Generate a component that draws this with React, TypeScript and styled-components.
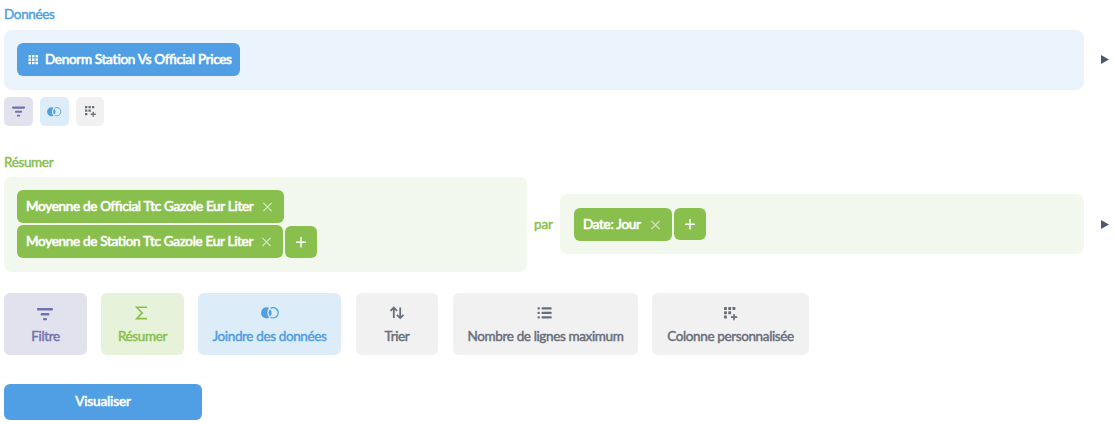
import React from "react";
import styled, { createGlobalStyle } from "styled-components";

const color = {
  brand: "#509ee3",
  green: "#88bf4d",
  purple: "#7172ad",
  dark: "#696e7b",
  arrow: "#4c5773",
};

const GlobalStyle = createGlobalStyle`
  * { box-sizing: border-box; }
  body { margin: 0; background: #fff; }
`;

const Page = styled.main`
  width: 1115px;
  height: 424px;
  padding: 5px 0 0 4px;
  overflow: hidden;
  font: 400 13.5px/18px Lato, "Liberation Sans", sans-serif;
  font-feature-settings: "liga" 1;
  -webkit-text-stroke: 0.45px currentColor;
`;

const StepTitle = styled.h2<{ $color: string }>`
  margin: 0;
  height: 18px;
  font: inherit;
  letter-spacing: -0.35px;
  color: ${(p) => p.$color};
`;

const StepRow = styled.div<{ $top: number }>`
  display: flex;
  align-items: center;
  margin-top: ${(p) => p.$top}px;
`;

const Cell = styled.div<{ $bg: string; $width: number; $height: number; $left?: number }>`
  display: flex;
  flex-wrap: wrap;
  align-content: flex-start;
  gap: 2px;
  width: ${(p) => p.$width}px;
  height: ${(p) => p.$height}px;
  padding: 13px;
  padding-left: ${(p) => p.$left ?? 13}px;
  border-radius: 8px;
  background: ${(p) => p.$bg};
`;

const ClauseBox = styled(Cell)`
  margin-bottom: 1px;
  padding-top: 14px;
`;

const Pill = styled.div<{ $bg: string; $width: number }>`
  display: flex;
  align-items: center;
  justify-content: space-between;
  width: ${(p) => p.$width}px;
  height: 33px;
  padding: 0 9px 1px;
  border-radius: 6px;
  color: #fff;
  background: ${(p) => p.$bg};
  white-space: nowrap;
`;

const PillRow = styled.div`
  display: flex;
  align-items: flex-end;
  gap: 2px;
  width: 100%;
`;

const TopRow = styled(PillRow)`
  align-items: flex-start;
`;

const AddButton = styled.button`
  display: flex;
  align-items: center;
  justify-content: center;
  width: 32px;
  height: 32px;
  padding: 0;
  border: 0;
  border-radius: 6px;
  color: #fff;
  background: ${color.green};
`;

const By = styled.span`
  width: 33px;
  padding-bottom: 2px;
  text-align: center;
  letter-spacing: -0.1px;
  color: ${color.green};
`;

const Preview = styled.div`
  display: flex;
  margin: 0 0 1px 17px;
  color: ${color.arrow};
`;

const SmallActions = styled.div`
  display: flex;
  gap: 7px;
  margin: 7px 0 27px;
`;

const SmallAction = styled.button<{ $bg: string; $color: string; $width?: number }>`
  display: flex;
  align-items: center;
  justify-content: center;
  width: ${(p) => p.$width ?? 29}px;
  height: 29px;
  padding: 0 1px 0 0;
  border: 0;
  border-radius: 5px;
  color: ${(p) => p.$color};
  background: ${(p) => p.$bg};
`;

const SmallColumnAction = styled(SmallAction)`
  padding: 0 0 0 1px;
`;

const Actions = styled.div`
  display: flex;
  margin-top: 21px;
`;

const Action = styled.button<{ $bg: string; $color: string; $width: number; $gap?: number }>`
  display: flex;
  flex-direction: column;
  align-items: center;
  width: ${(p) => p.$width}px;
  height: 62px;
  margin-right: ${(p) => p.$gap ?? 14}px;
  padding: 13px 0 0;
  border: 0;
  border-radius: 6px;
  font: inherit;
  letter-spacing: -0.37px;
  color: ${(p) => p.$color};
  background: ${(p) => p.$bg};
  white-space: nowrap;
`;

const ActionIcon = styled.span<{ $top?: number; $right?: number }>`
  display: flex;
  height: 21px;
  padding: ${(p) => p.$top ?? 0}px ${(p) => p.$right ?? 0}px 0 0;
`;

const Visualize = styled.button`
  display: block;
  width: 198px;
  height: 36px;
  margin-top: 29px;
  padding: 0 0 2px;
  border: 0;
  border-radius: 6px;
  font: inherit;
  letter-spacing: -0.13px;
  -webkit-text-stroke-width: 0.6px;
  color: #fff;
  background: ${color.brand};
`;

const Glyph = styled.svg`
  display: block;
  flex: none;
  overflow: visible;
`;

const TableIcon = () => (
  <Glyph width="10" height="9" viewBox="0 0 10 9" fill="currentColor">
    {[0, 3.4, 6.8].flatMap((y) =>
      [0.5, 4, 7.5].map((x) => <rect key={`${x}-${y}`} x={x} y={y} width="2.5" height="2.4" />)
    )}
  </Glyph>
);

const FilterIcon = ({ size }: { size: number }) => (
  <Glyph width={size} height={size} viewBox="0 0 16 16" fill="currentColor">
    <rect x="0" y="1.9" width="16" height="2.6" rx="1" />
    <rect x="3.6" y="7" width="8.8" height="2.5" rx="1" />
    <rect x="6" y="11.9" width="4" height="2.4" rx="1" />
  </Glyph>
);

const JoinIcon = ({ width }: { width: number }) => (
  <Glyph width={width} height={(width * 12) / 18} viewBox="0 0 18 12">
    <path d="M8.3 .9A5.7 5.7 0 1 0 8.3 11.1A8 8 0 0 1 8.3 .9Z" fill="currentColor" />
    <path d="M9.3 2.2C11.5 4.7 11.5 7.3 9.3 9.8C7.3 7.3 7.3 4.7 9.3 2.2Z" fill="currentColor" />
    <path d="M9.8 1.4A5.3 5.3 0 1 1 9.8 10.6" fill="none" stroke="currentColor" strokeWidth="1.2" />
  </Glyph>
);

const CustomColumnIcon = ({ size }: { size: number }) => (
  <Glyph width={size} height={size} viewBox="0 0 14 14" fill="currentColor">
    {[[0, 0], [4.4, 0], [8.8, 0], [0, 4.4], [4.4, 4.4], [0, 8.8]].map(([x, y]) => (
      <rect key={`${x}-${y}`} x={x} y={y} width="3" height="3" rx=".4" />
    ))}
    <path d="M9.6 7.3h1.6v2.4h2.5v1.6h-2.5v2.5H9.6v-2.5H7.2V9.7h2.4z" />
  </Glyph>
);

const SumIcon = () => (
  <Glyph width="12" height="14" viewBox="0 0 12 14" fill="none" stroke="currentColor" strokeWidth="1.6">
    <path d="M11 1.2H.7L6.2 6.9L.7 12.6H11" />
  </Glyph>
);

const SortIcon = () => (
  <Glyph width="14" height="14" viewBox="0 0 14 14" fill="none" stroke="currentColor" strokeWidth="1.8">
    <path d="M3.8 12V1.6M.5 4.9L3.8 1.6L7.1 4.9M10.2 1.5V12M6.9 8.8L10.2 12.1L13.5 8.8" />
  </Glyph>
);

const ListIcon = () => (
  <Glyph width="14" height="14" viewBox="0 0 14 14" fill="currentColor">
    {[1.2, 5.7, 10.2].map((y) => (
      <React.Fragment key={y}>
        <rect x="-.5" y={y} width="2.4" height="2.3" rx=".8" />
        <rect x="3.5" y={y} width="10.2" height="2.3" rx=".8" />
      </React.Fragment>
    ))}
  </Glyph>
);

const CloseIcon = () => (
  <Glyph width="9" height="9" viewBox="0 0 9 9" stroke="currentColor" strokeWidth="1.3" opacity=".65">
    <path d="M.4 .9L8.6 9.1M8.6 .9L.4 9.1" />
  </Glyph>
);

const PlusIcon = () => (
  <Glyph width="10" height="10" viewBox="0 0 10 10" stroke="currentColor" strokeWidth="1.4">
    <path d="M5 0V10.5M0 5.3H10" />
  </Glyph>
);

const PlayIcon = () => (
  <Glyph width="8" height="9" viewBox="0 0 8 9" fill="currentColor">
    <path d="M0 0L8 4.5L0 9Z" />
  </Glyph>
);

const PillText = styled.span`
  letter-spacing: -0.3px;
  -webkit-text-stroke-width: 0.65px;
`;

const ClauseClose = styled.span`
  padding-right: 3px;
`;

const Clause = ({ text, width }: { text: string; width: number }) => (
  <Pill $bg={color.green} $width={width}>
    <PillText>{text}</PillText>
    <ClauseClose>
      <CloseIcon />
    </ClauseClose>
  </Pill>
);

const SourcePill = styled(Pill)`
  justify-content: flex-start;
  gap: 7px;
  padding-left: 11px;
`;

export default function App() {
  return (
    <Page>
      <GlobalStyle />
      <StepTitle $color={color.brand}>Données</StepTitle>
      <StepRow $top={7}>
        <Cell $bg="#ebf4fc" $width={1080} $height={60}>
          <SourcePill $bg={color.brand} $width={223}>
            <TableIcon />
            <PillText>Denorm Station Vs Official Prices</PillText>
          </SourcePill>
        </Cell>
        <Preview><PlayIcon /></Preview>
      </StepRow>
      <SmallActions>
        <SmallAction $bg="#e2e2ee" $color={color.purple}><FilterIcon size={13} /></SmallAction>
        <SmallAction $bg="#dcecf9" $color={color.brand}><JoinIcon width={14} /></SmallAction>
        <SmallColumnAction $bg="#f1f1f1" $color={color.dark} $width={28}><CustomColumnIcon size={11} /></SmallColumnAction>
      </SmallActions>

      <StepTitle $color={color.green}>Résumer</StepTitle>
      <StepRow $top={6}>
        <Cell $bg="#f2f8ed" $width={523} $height={95}>
          <PillRow>
            <Clause text="Moyenne de Official Ttc Gazole Eur Liter" width={267} />
          </PillRow>
          <PillRow>
            <Clause text="Moyenne de Station Ttc Gazole Eur Liter" width={266} />
            <AddButton><PlusIcon /></AddButton>
          </PillRow>
        </Cell>
        <By>par</By>
        <ClauseBox $bg="#f2f8ed" $width={524} $height={60} $left={14}>
          <TopRow>
            <Clause text="Date: Jour" width={98} />
            <AddButton><PlusIcon /></AddButton>
          </TopRow>
        </ClauseBox>
        <Preview><PlayIcon /></Preview>
      </StepRow>

      <Actions>
        <Action $bg="#e2e2ee" $color={color.purple} $width={83}>
          <ActionIcon $right={1}><FilterIcon size={16} /></ActionIcon>Filtre
        </Action>
        <Action $bg="#e6f2da" $color={color.green} $width={83}>
          <ActionIcon $right={1}><SumIcon /></ActionIcon>Résumer
        </Action>
        <Action $bg="#dcecf9" $color={color.brand} $width={143} $gap={15}>
          <ActionIcon $top={1}><JoinIcon width={17.5} /></ActionIcon>Joindre des données
        </Action>
        <Action $bg="#f1f1f1" $color={color.dark} $width={82} $gap={15}>
          <ActionIcon><SortIcon /></ActionIcon>Trier
        </Action>
        <Action $bg="#f1f1f1" $color={color.dark} $width={185}>
          <ActionIcon $right={1}><ListIcon /></ActionIcon>Nombre de lignes maximum
        </Action>
        <Action $bg="#f1f1f1" $color={color.dark} $width={157}>
          <ActionIcon $top={1}><CustomColumnIcon size={13.5} /></ActionIcon>Colonne personnalisée
        </Action>
      </Actions>
      <Visualize>Visualiser</Visualize>
    </Page>
  );
}
